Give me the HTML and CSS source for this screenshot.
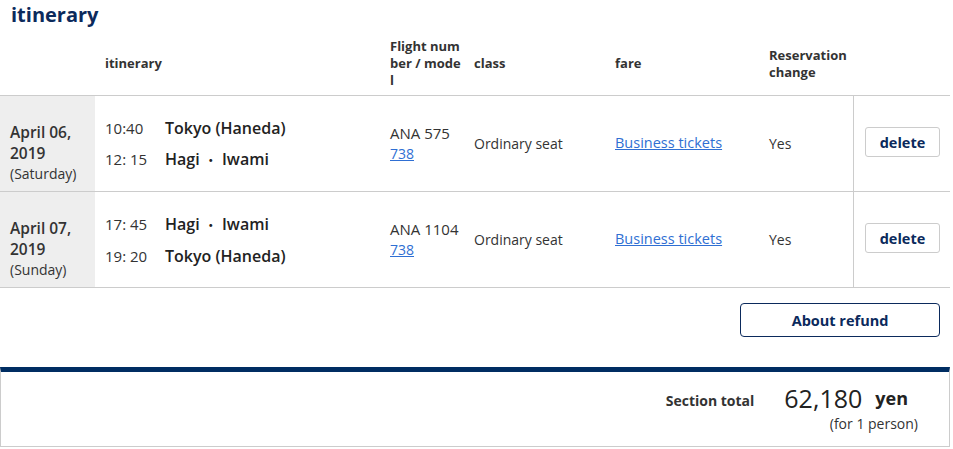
FILE: index.html
```html
<!DOCTYPE html>
<html lang="en">
<head>
<meta charset="utf-8">
<title>itinerary</title>
<link rel="stylesheet" href="styles.css">
</head>
<body>
<div class="page">
  <h2 class="title">itinerary</h2>
  <div class="itin">
    <div class="row head">
      <div class="cell"></div>
      <div class="cell">itinerary</div>
      <div class="cell">Flight num<br>ber / mode<br>l</div>
      <div class="cell">class</div>
      <div class="cell">fare</div>
      <div class="cell">Reservation<br>change</div>
      <div class="cell"></div>
    </div>
    <div class="row body">
      <div class="cell date"><span class="d">April 06,</span><span class="d">2019</span><span class="wd">(Saturday)</span></div>
      <div class="cell route">
        <div class="leg"><span class="time">10:40</span><span class="city">Tokyo (Haneda)</span></div>
        <div class="leg"><span class="time">12: 15</span><span class="city">Hagi <span class="dot">・</span> Iwami</span></div>
      </div>
      <div class="cell flight"><span class="no">ANA 575</span><a href="#">738</a></div>
      <div class="cell">Ordinary seat</div>
      <div class="cell fare"><a href="#">Business tickets</a></div>
      <div class="cell">Yes</div>
      <div class="cell act"><button class="del">delete</button></div>
    </div>
    <div class="row body">
      <div class="cell date"><span class="d">April 07,</span><span class="d">2019</span><span class="wd">(Sunday)</span></div>
      <div class="cell route">
        <div class="leg"><span class="time">17: 45</span><span class="city">Hagi <span class="dot">・</span> Iwami</span></div>
        <div class="leg"><span class="time">19: 20</span><span class="city">Tokyo (Haneda)</span></div>
      </div>
      <div class="cell flight"><span class="no">ANA 1104</span><a href="#">738</a></div>
      <div class="cell">Ordinary seat</div>
      <div class="cell fare"><a href="#">Business tickets</a></div>
      <div class="cell">Yes</div>
      <div class="cell act"><button class="del">delete</button></div>
    </div>
  </div>
  <div class="refund-wrap"><button class="refund">About refund</button></div>
  <div class="total">
    <div class="sum">
      <span class="lbl">Section total</span>
      <span class="amt">62,180</span>
      <span class="yen">yen</span>
    </div>
    <div class="per">(for 1 person)</div>
  </div>
</div>
</body>
</html>
```
FILE: styles.css
```css
* { box-sizing: border-box; }
body {
  margin: 0;
  font-family: "Open Sans", "Noto Sans CJK JP", sans-serif;
  color: #333;
  background: #fff;
}
.page { width: 950px; }
.title {
  margin: 0;
  height: 36px;
  padding: 2px 0 0 11px;
  font-size: 20px;
  line-height: 26px;
  font-weight: 700;
  color: #0b2a5c;
}
.row {
  display: grid;
  grid-template-columns: 95px 285px 84px 141px 154px 94px 97px;
  border-bottom: 1px solid #ccc;
}
.head {
  height: 60px;
  padding-bottom: 4px;
  align-items: center;
  font-size: 13px;
  font-weight: 700;
  line-height: 17px;
}
.cell { padding-left: 10px; }
.body {
  height: 96px;
  align-items: center;
  font-size: 14px;
}
.body .cell { height: 100%; display: flex; flex-direction: column; justify-content: center; }
.date {
  background: #eee;
  padding-top: 18px;
}
.date .d { font-size: 15.5px; font-weight: 600; line-height: 21px; color: #333; }
.date .wd { font-size: 14px; line-height: 18px; margin-top: 1px; }
.route { gap: 11px; }
.leg { display: flex; font-size: 15px; line-height: 20px; }
.time { width: 60px; }
.city { font-size: 16px; font-weight: 600; color: #222; }
.dot { font-weight: 400; font-size: 14px; }
.flight { font-size: 14px; line-height: 19px; padding-bottom: 2px; }
.flight .no { font-size: 15px; line-height: 21px; }
.flight a, .fare a { color: #2f6fd3; }
.fare { padding-bottom: 3px; font-size: 14.5px; }
.act {
  border-left: 1px solid #ccc;
  align-items: center;
  padding-left: 0;
  padding-bottom: 3px;
}
.del {
  width: 75px;
  height: 30px;
  margin-left: 1px;
  background: #fff;
  border: 1px solid #ccc;
  border-radius: 3px;
  font-family: inherit;
  font-size: 14.5px;
  font-weight: 700;
  color: #0b2a5c;
  padding: 0;
}
.refund-wrap {
  display: flex;
  justify-content: flex-end;
  padding: 15px 10px 0 0;
  height: 79px;
}
.refund {
  width: 200px;
  height: 34px;
  background: #fff;
  border: 1px solid #0b2a5c;
  border-radius: 4px;
  font-family: inherit;
  font-size: 14.5px;
  font-weight: 700;
  color: #0b2a5c;
  padding: 0;
}
.total {
  border-top: 5px solid #002d62;
  border-left: 1px solid #ccc;
  border-right: 1px solid #ccc;
  border-bottom: 1px solid #ccc;
  height: 80px;
  padding: 10px 31px 0 0;
  display: flex;
  flex-direction: column;
  align-items: flex-end;
}
.sum { display: flex; align-items: center; padding-right: 10px; height: 32px; }
.lbl { font-size: 14px; font-weight: 700; margin-right: 30px; padding-top: 4px; }
.amt { font-size: 25px; line-height: 34px; color: #222; margin-right: 13px; }
.yen { font-size: 18px; font-weight: 700; color: #222; }
.per { font-size: 14px; line-height: 19px; margin-top: 0; }
```
